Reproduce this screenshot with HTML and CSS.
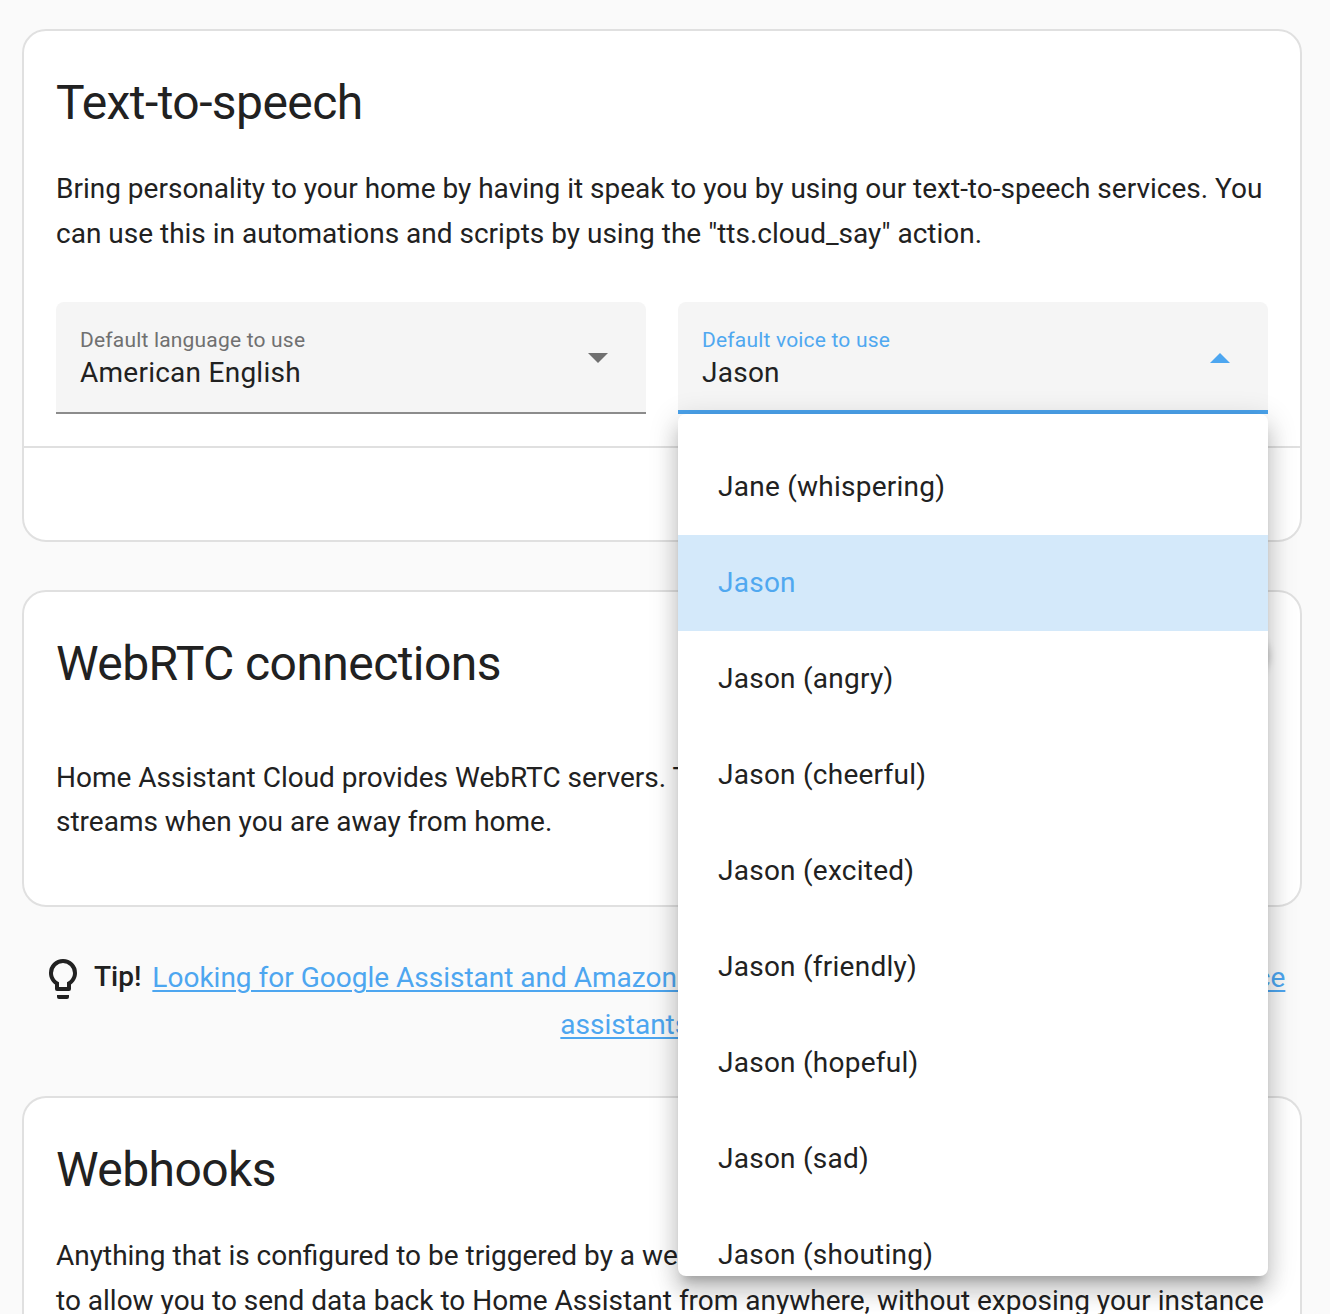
FILE: index.html
```html
<!DOCTYPE html>
<html lang="en">
<head>
<meta charset="utf-8">
<title>Home Assistant Cloud</title>
<link rel="stylesheet" href="styles.css">
</head>
<body>
<main class="page">
  <section class="card tts">
    <h1 class="card-title">Text-to-speech</h1>
    <p class="text">Bring personality to your home by having it speak to you by using our text-to-speech services. You<br>can use this in automations and scripts by using the "tts.cloud_say" action.</p>
    <div class="fields">
      <div class="select">
        <div class="select-text">
          <span class="label">Default language to use</span>
          <span class="value">American English</span>
        </div>
        <svg class="arrow" width="20" height="10" viewBox="0 0 20 10"><path d="M0 0H20L10 10Z"/></svg>
      </div>
      <div class="select active">
        <div class="select-text">
          <span class="label">Default voice to use</span>
          <span class="value">Jason</span>
        </div>
        <svg class="arrow" width="20" height="10" viewBox="0 0 20 10"><path d="M0 10H20L10 0Z"/></svg>
        <ul class="menu">
          <li class="item">Jane (whispering)</li>
          <li class="item selected">Jason</li>
          <li class="item">Jason (angry)</li>
          <li class="item">Jason (cheerful)</li>
          <li class="item">Jason (excited)</li>
          <li class="item">Jason (friendly)</li>
          <li class="item">Jason (hopeful)</li>
          <li class="item">Jason (sad)</li>
          <li class="item">Jason (shouting)</li>
        </ul>
      </div>
    </div>
    <div class="actions"></div>
  </section>

  <section class="card webrtc">
    <div class="header">
      <h1 class="card-title">WebRTC connections</h1>
      <span class="switch"><span class="thumb"></span></span>
    </div>
    <p class="text">Home Assistant Cloud provides WebRTC servers. They<br>streams when you are away from home.</p>
  </section>

  <div class="tip">
    <svg class="bulb" width="48" height="48" viewBox="0 0 24 24"><path d="M12,2A7,7 0 0,1 19,9C19,11.38 17.81,13.47 16,14.74V17A1,1 0 0,1 15,18H9A1,1 0 0,1 8,17V14.74C6.19,13.47 5,11.38 5,9A7,7 0 0,1 12,2M9,21V20H15V21A1,1 0 0,1 14,22H10A1,1 0 0,1 9,21M12,4A5,5 0 0,0 7,9C7,11.05 8.23,12.81 10,13.58V16H14V13.58C15.77,12.81 17,11.05 17,9A5,5 0 0,0 12,4Z"/></svg>
    <span class="tip-label">Tip!</span>
    <a class="tip-link" href="#"><span class="tip-line"><span>Looking for Google Assistant and Amazon Alexa</span><span>voice</span></span><span class="tip-last">assistants</span></a>
  </div>

  <section class="card webhooks">
    <h1 class="card-title">Webhooks</h1>
    <p class="text">Anything that is configured to be triggered by a webhook<br>to allow you to send data back to Home Assistant from anywhere, without exposing your instance</p>
  </section>
</main>
</body>
</html>
```
FILE: styles.css
```css
* { box-sizing: border-box; }
html { overflow: hidden; }
body {
  margin: 0;
  height: 1314px;
  overflow: hidden;
  background: #fafafa;
  color: #212121;
  font-family: Roboto, sans-serif;
  font-size: 28px;
  -webkit-font-smoothing: antialiased;
}
.page {
  height: 1314px;
  padding: 29px 28px 0 22px;
  overflow: hidden;
}
.card {
  background: #fff;
  border: 2px solid #e0e0e0;
  border-radius: 24px;
}
.card-title {
  margin: 0;
  padding: 24px 32px 0;
  font-size: 48px;
  font-weight: 400;
  line-height: 96px;
  letter-spacing: -0.576px;
}
.text {
  margin: 0;
  padding: 0 32px;
  line-height: 44.8px;
  white-space: nowrap;
}
.tts { height: 513px; }
.tts .text { padding-top: 16px; }
.fields {
  display: grid;
  grid-template-columns: 1fr 1fr;
  gap: 32px;
  padding: 45px 32px 32px;
}
.select {
  position: relative;
  display: flex;
  align-items: flex-start;
  justify-content: space-between;
  height: 112px;
  padding: 0 38px 0 24px;
  background: #f5f5f5;
  border-bottom: 2px solid #8c8c8c;
  border-radius: 8px 8px 0 0;
}
.select.active { border-bottom: 4px solid #4ba3ec; }
.select-text {
  display: flex;
  flex-direction: column;
  padding-top: 22px;
}
.label {
  font-size: 21px;
  line-height: 32px;
  letter-spacing: 0.19px;
  color: #707070;
}
.value {
  line-height: 34px;
  letter-spacing: 0.25px;
}
.arrow { margin-top: 51px; fill: #707070; }
.active .label { color: #50a8f0; }
.active .arrow { fill: #4da6f0; }
.menu {
  position: absolute;
  z-index: 2;
  top: 112px;
  left: 0;
  width: 590px;
  height: 862px;
  margin: 0;
  padding: 25px 0 0;
  overflow: hidden;
  list-style: none;
  background: #fff;
  border-radius: 8px;
  box-shadow: 0 10px 10px -6px rgba(0,0,0,.2), 0 16px 20px 2px rgba(0,0,0,.14), 0 6px 28px 4px rgba(0,0,0,.12);
}
.item {
  height: 96px;
  padding-left: 40px;
  line-height: 96px;
  letter-spacing: 0.25px;
}
.item:last-child { height: 69px; }
.item.selected { background: #d4e9fa; color: #50a8f0; }
.actions { border-top: 2px solid #e0e0e0; }
.webrtc { height: 317px; margin-top: 48px; }
.header { display: flex; justify-content: space-between; }
.switch {
  width: 72px;
  height: 28px;
  margin: 48px 32px 0 0;
  border-radius: 14px;
  background: #a6d3f7;
}
.thumb {
  display: block;
  width: 40px;
  height: 40px;
  margin: -6px 0 0 32px;
  border-radius: 50%;
  background: #4da6f0;
  box-shadow: 0 2px 8px rgba(0,0,0,.3);
}
.webrtc .text { padding-top: 44px; line-height: 44.4px; }
.tip {
  display: flex;
  align-items: flex-start;
  height: 141px;
  margin-top: 48px;
  padding-left: 17px;
  line-height: 47px;
}
.bulb { fill: #212121; }
.tip-label { margin: -2px 0 0 7px; font-weight: 500; }
.tip-link {
  width: 1133px;
  margin: -1px 0 0 11px;
  color: #4da6f0;
  text-decoration-thickness: 2px;
  text-underline-offset: 3px;
  white-space: nowrap;
}
.tip-line { display: flex; justify-content: space-between; }
.tip-last { display: block; padding-left: 408px; }
.webhooks {
  height: 218px;
  border-bottom: 0;
  border-radius: 24px 24px 0 0;
}
.webhooks .text { padding-top: 16px; }
```
